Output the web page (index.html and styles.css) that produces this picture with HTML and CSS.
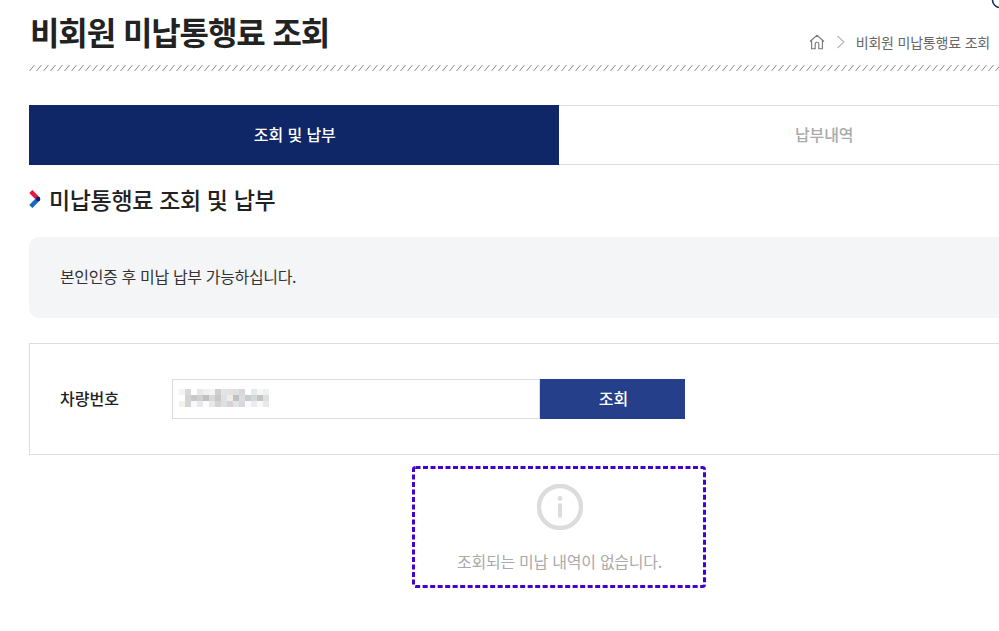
FILE: index.html
```html
<!DOCTYPE html>
<html lang="ko">
<head>
<meta charset="utf-8">
<title>비회원 미납통행료 조회</title>
<link rel="stylesheet" href="styles.css">
</head>
<body>
<svg class="corner-arc" width="12" height="9" viewBox="0 0 12 9"><circle cx="13" cy="0" r="7.500" fill="none" stroke="#12305c" stroke-width="1.600"/></svg>
<main class="page">
  <header class="head">
    <h1 class="title">비회원 미납통행료 조회</h1>
    <nav class="crumbs">
      <svg class="home" width="16" height="16" viewBox="0 0 16 16"><path d="M1 7.500 8 1.300l7 6.200M2.600 6.300v8.400h3.600v-4.600a1.800 1.800 0 0 1 3.600 0v4.600h3.600V6.300" fill="none" stroke="#777" stroke-width="1.100"/></svg>
      <svg class="sep" width="10" height="14" viewBox="0 0 10 14"><path d="M1.500 1 8 7l-6.500 6" fill="none" stroke="#b5b5b5" stroke-width="1.100"/></svg>
      <span>비회원 미납통행료 조회</span>
    </nav>
  </header>
  <svg class="hatch" width="100%" height="6"><defs><pattern id="h" width="7" height="6" patternUnits="userSpaceOnUse"><path d="M0.500 6 5.500 0" stroke="#8a8a8a" stroke-width="1" fill="none"/></pattern></defs><rect width="100%" height="6" fill="url(#h)"/></svg>

  <div class="tabs">
    <div class="tab tab-on">조회 및 납부</div>
    <div class="tab">납부내역</div>
  </div>

  <h2 class="sec">
    <svg width="12" height="18" viewBox="0 0 12 18"><path d="M1.800 1.500 9.200 9" stroke="#e4173e" stroke-width="4.400" fill="none"/><path d="M9.200 9 1.800 16.500" stroke="#1668c8" stroke-width="4.400" fill="none"/><circle cx="9.200" cy="9" r="2.200" fill="#10206e"/></svg>
    <span>미납통행료 조회 및 납부</span>
  </h2>

  <div class="notice"><span>본인인증 후 미납 납부 가능하십니다.</span></div>

  <form class="search">
    <label class="lbl">차량번호</label>
    <div class="input">
      <svg class="mosaic" width="90" height="18" viewBox="0 0 90 18" shape-rendering="crispEdges">
        <g>
          <rect x="0" width="6" height="6" fill="#f4f4f4"/><rect x="6" width="6" height="6" fill="#d8d8d8"/><rect x="18" width="6" height="6" fill="#e8e8ea"/><rect x="24" width="6" height="6" fill="#f2f0ee"/><rect x="30" width="6" height="6" fill="#f4f4f4"/><rect x="36" width="6" height="6" fill="#cfcfcf"/><rect x="42" width="6" height="6" fill="#e2e4e8"/><rect x="48" width="6" height="6" fill="#e2e2e4"/><rect x="54" width="6" height="6" fill="#e0e0e0"/><rect x="60" width="6" height="6" fill="#d8d8dc"/><rect x="72" width="6" height="6" fill="#e8e8e8"/><rect x="78" width="6" height="6" fill="#f8f6f2"/><rect x="84" width="6" height="6" fill="#eef0f4"/>
        </g>
        <g>
          <rect x="6" y="6" width="6" height="6" fill="#d4d4d4"/><rect x="12" y="6" width="6" height="6" fill="#c8c8c8"/><rect x="18" y="6" width="6" height="6" fill="#d0d0d0"/><rect x="24" y="6" width="6" height="6" fill="#c0c0c0"/><rect x="30" y="6" width="6" height="6" fill="#d8d8d8"/><rect x="36" y="6" width="6" height="6" fill="#c8c8c8"/><rect x="42" y="6" width="6" height="6" fill="#dde2e6"/><rect x="48" y="6" width="6" height="6" fill="#f0ece8"/><rect x="54" y="6" width="6" height="6" fill="#c0c0c0"/><rect x="60" y="6" width="6" height="6" fill="#dcdcdc"/><rect x="66" y="6" width="6" height="6" fill="#c8ccd0"/><rect x="72" y="6" width="6" height="6" fill="#d4d8dc"/><rect x="78" y="6" width="6" height="6" fill="#c4c4c4"/><rect x="84" y="6" width="6" height="6" fill="#dcdfe4"/>
        </g>
        <g>
          <rect x="0" y="12" width="6" height="6" fill="#f4f2ec"/><rect x="6" y="12" width="6" height="6" fill="#d4d4d4"/><rect x="12" y="12" width="6" height="6" fill="#f8f8fc"/><rect x="18" y="12" width="6" height="6" fill="#e8e8ec"/><rect x="24" y="12" width="6" height="6" fill="#fcfcfa"/><rect x="30" y="12" width="6" height="6" fill="#e8e8e4"/><rect x="36" y="12" width="6" height="6" fill="#d4d4d4"/><rect x="42" y="12" width="6" height="6" fill="#dbe0e4"/><rect x="48" y="12" width="6" height="6" fill="#d4d4d4"/><rect x="54" y="12" width="6" height="6" fill="#e4e4e4"/><rect x="60" y="12" width="6" height="6" fill="#d8d8dc"/><rect x="66" y="12" width="6" height="6" fill="#f8fbff"/><rect x="72" y="12" width="6" height="6" fill="#ececec"/><rect x="78" y="12" width="6" height="6" fill="#f8f8f8"/><rect x="84" y="12" width="6" height="6" fill="#e8e8ec"/>
        </g>
      </svg>
    </div>
    <div class="btn">조회</div>
  </form>

  <section class="empty">
    <svg class="dash" width="294" height="122" viewBox="0 0 294 122"><rect x="1.500" y="1.500" width="291" height="119" rx="2" fill="none" stroke="#4400cc" stroke-width="3" stroke-dasharray="5 2.500"/></svg>
    <svg width="46" height="46" viewBox="0 0 46 46"><circle cx="23" cy="23" r="21" fill="none" stroke="#dcdcdc" stroke-width="4.400"/><circle cx="23" cy="14.500" r="2.400" fill="#dcdcdc"/><path d="M23 21v11" stroke="#dcdcdc" stroke-width="4" stroke-linecap="round"/></svg>
    <p>조회되는 미납 내역이 없습니다.</p>
  </section>
</main>
</body>
</html>
```
FILE: styles.css
```css
* { box-sizing: border-box; }
html, body { margin: 0; height: 100%; overflow: hidden; background: #fff; }
body { font-family: "Noto Sans CJK KR", "Noto Sans", sans-serif; color: #222; position: relative; }
.corner-arc { position: absolute; top: 0; right: 0; }
.page { width: 1060px; margin-left: 29px; }
.head { display: flex; justify-content: space-between; align-items: flex-end; height: 65px; padding-right: 99px; }
.title { margin: 8px 0 0 1px; font-size: 32px; font-weight: 700; line-height: 46px; letter-spacing: -1.1px; color: #222; align-self: flex-start; }
.crumbs { display: flex; align-items: center; height: 18px; margin-bottom: 14px; font-size: 14px; letter-spacing: -0.2px; color: #666; line-height: 18px; }
.home { margin-right: 11px; }
.sep { margin-right: 10px; }
.hatch { display: block; }
.tabs { display: flex; height: 60px; margin-top: 34px; }
.tab { flex: 1; display: flex; align-items: center; justify-content: center; font-size: 16px; font-weight: 500; letter-spacing: -0.1px; color: #aaa; border: 1px solid #ddd; border-left: 0; padding: 0 0 3px 2px; }
.tab-on { background: #0f2667; color: #fff; border: 0; }
.sec { display: flex; align-items: center; gap: 8px; height: 36px; margin: 16px 0 20px; font-size: 23px; font-weight: 500; letter-spacing: -0.35px; color: #222; }
.sec span { line-height: 36px; }
.notice { height: 81px; background: #f4f5f7; border-radius: 10px; padding: 0 0 3px 31px; display: flex; align-items: center; font-size: 16px; letter-spacing: -0.35px; color: #333; }
.search { display: flex; align-items: center; height: 112px; margin-top: 25px; border: 1px solid #ddd; padding-left: 30px; }
.lbl { width: 112px; font-size: 16px; font-weight: 500; color: #222; padding-bottom: 3px; }
.input { width: 368px; height: 40px; border: 1px solid #ddd; display: flex; align-items: center; padding: 0 0 2px 6px; }
.btn { width: 145px; height: 40px; background: #263f8a; color: #fff; font-size: 16px; font-weight: 500; display: flex; align-items: center; justify-content: center; padding: 0 0 3px 2px; }
.empty { width: 294px; height: 122px; margin: 11px auto 0; display: flex; flex-direction: column; align-items: center; padding: 18px 0 0 1px; position: relative; }
.dash { position: absolute; top: 0; left: 0; }
.empty p { margin: 19px 0 0; font-size: 16px; letter-spacing: -0.25px; line-height: 24px; color: #aaa; }
```
